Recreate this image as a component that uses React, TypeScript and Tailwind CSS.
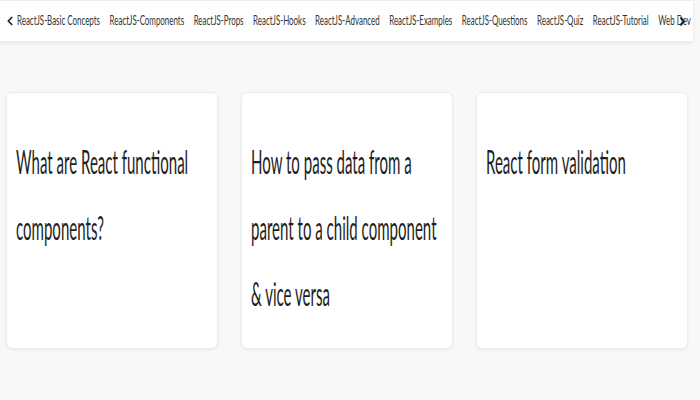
import { ChevronLeft, ChevronRight } from "lucide-react";

const topics = [
  "ReactJS-Basic Concepts",
  "ReactJS-Components",
  "ReactJS-Props",
  "ReactJS-Hooks",
  "ReactJS-Advanced",
  "ReactJS-Examples",
  "ReactJS-Questions",
  "ReactJS-Quiz",
  "ReactJS-Tutorial",
  "Web Dev",
];

const articles = [
  "What are React functional components?",
  "How to pass data from a parent to a child component & vice versa",
  "React form validation",
];

function TopicBar() {
  return (
    <nav className="relative flex h-[41px] w-[693px] items-center overflow-hidden border-t border-[#eeeeee] bg-white shadow-[0_2px_4px_rgba(0,0,0,0.08)]">
      <ChevronLeft className="ml-[3px] h-[14px] w-[14px] shrink-0 text-[#222]" strokeWidth={3} />
      <div className="origin-left scale-x-[0.635] whitespace-nowrap">
        <ul className="flex gap-[15px] text-[12.5px] text-[#333]">
          {topics.map((t) => (
            <li key={t}>{t}</li>
          ))}
        </ul>
      </div>
      <div className="absolute right-[4px] top-0 flex h-full items-center">
        <ChevronRight className="h-[13px] w-[13px] text-[#222]" strokeWidth={3.5} />
      </div>
    </nav>
  );
}

function ArticleCard({ title }: { title: string }) {
  return (
    <div className="h-[257px] rounded-md border border-[#ececec] bg-white px-[9px] pt-[36px] shadow-[0_1px_3px_rgba(0,0,0,0.06)]">
      <h3 className="w-[420px] origin-top-left scale-x-[0.47] text-[32px] font-normal leading-[66px] text-[#1e1e1e]">
        {title}
      </h3>
    </div>
  );
}

export default function App() {
  return (
    <main
      className="h-[400px] w-[700px] overflow-hidden bg-[#f8f8f8]"
      style={{ fontFamily: "Lato, 'Liberation Sans', sans-serif" }}
    >
      <TopicBar />
      <section className="grid grid-cols-[212px_212px_212px] gap-[23px] px-[6px] pt-[51px]">
        {articles.map((a) => (
          <ArticleCard key={a} title={a} />
        ))}
      </section>
    </main>
  );
}
